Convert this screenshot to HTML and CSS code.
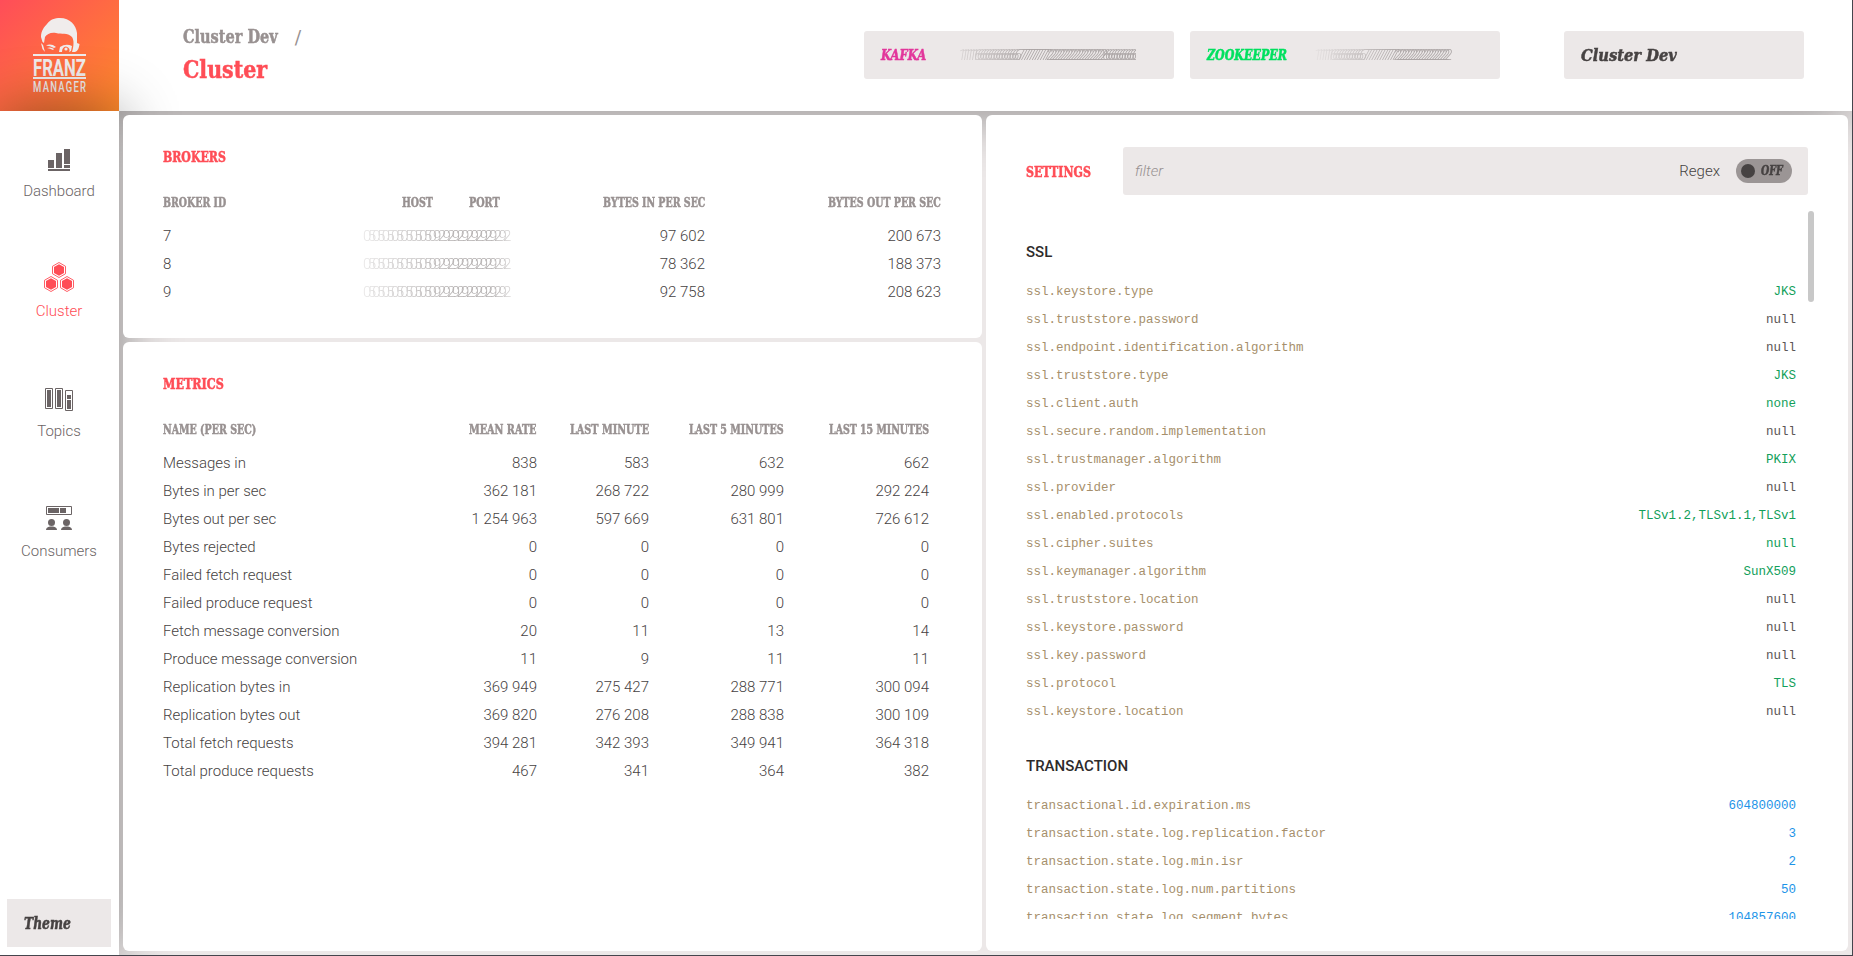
FILE: index.html
```html
<!DOCTYPE html>
<html lang="en">
<head>
<meta charset="utf-8">
<title>Franz Manager</title>
<link rel="stylesheet" href="styles.css">
</head>
<body>
<div class="app">
  <header class="header">
    <svg class="logo" viewBox="0 0 119 111">
      <defs><linearGradient id="lg" x1="0" y1="0" x2="1" y2="1"><stop offset="0" stop-color="#ff4d59"/><stop offset="1" stop-color="#ff8a2a"/></linearGradient></defs>
      <rect width="119" height="111" fill="url(#lg)"/>
      <g fill="#f0ecec">
        <path d="M42.500 42L41 37C41 31 44 27 47 24C50 19.500 55 18 60 18C70 18 76 25 77 33L77 43L79.500 44C79 48 78 51 75 52L72 52C74 45 74 40 72 37C67 32 62 35 56 33C51 32 47 34 45 37L44 43Z"/>
        <path d="M46 45.500Q51 43 56 47L54 48Q50 45.500 46 45.500ZM47 48Q51 46.500 54 49L53 50Q50 48.500 47 48ZM60 47Q66 43 72 46L71 51L69 52Q71 48 66 46.500Q62 47 62 52L59 52Z"/>
        <circle cx="66" cy="49" r="1.600"/>
        <path d="M41 43L43 45L45 52L42.500 49Z"/>
        <rect x="33" y="54" width="53" height="2"/>
        <rect x="33" y="77" width="53" height="2"/>
        <text class="logo-name" x="33" y="75.500" textLength="53" lengthAdjust="spacingAndGlyphs">FRANZ</text>
        <text class="logo-sub" transform="translate(33 91.500) scale(.68 1)" textLength="78" lengthAdjust="spacing">MANAGER</text>
      </g>
    </svg>
    <div class="crumbs">
      <div class="crumb-top"><span class="slab" data-w="95">Cluster Dev</span><span class="slash">/</span></div>
      <div class="crumb-page"><span class="slab" data-w="84">Cluster</span></div>
    </div>
    <div class="box endpoint"><span class="slab it kafka" data-w="45">KAFKA</span><span class="smear smear-k">111111666666666666666677777777777222222222222222222222666666666666</span></div>
    <div class="box endpoint"><span class="slab it zoo" data-w="80">ZOOKEEPER</span><span class="smear smear-z">11111166666666666677777777777722222222222222222222</span></div>
    <div class="box picker"><span class="slab it" data-w="96">Cluster Dev</span></div>
  </header>
  <div class="body">
    <aside class="sidebar">
      <nav>
        <a class="item"><svg width="40" height="40"><path d="M9 20h6v8H9zM17 13h6v15h-6zM25 9h6v15h-6zM25 25h6v3h-6zM9 29h22v2H9z"/></svg>Dashboard</a>
        <a class="item active"><svg width="40" height="40"><defs><g id="hex"><path d="M0-7.500L6.500-3.750V3.750L0 7.500L-6.500 3.750V-3.750Z" fill="none" stroke="#ff4d56" stroke-width=".9"/><path d="M0-5.800L5-2.900V2.900L0 5.800L-5 2.900V-2.900Z"/></g></defs><use href="#hex" x="20" y="10"/><use href="#hex" x="12" y="24"/><use href="#hex" x="28" y="24"/></svg>Cluster</a>
        <a class="item"><svg width="40" height="40"><path d="M6.500 8.500h7v20h-7zM16.500 8.500h7v20h-7zM26.500 10.500h7v20h-7z" fill="none" stroke="#6b6465"/><path d="M8 10h4v17H8zM18 10h4v17h-4zM28 15h4v4h-4zM28 20h4v9h-4z"/></svg>Topics</a>
        <a class="item"><svg width="40" height="40"><path d="M7.500 6.500h25v8h-25z" fill="none" stroke="#6b6465"/><path d="M9 8h11v5H9zM21 8h6v5h-6z"/><g id="usr"><circle cx="12.500" cy="22.500" r="3.500"/><path d="M7 30Q7 27 11 26.500H14Q18 27 18 30Z"/></g><use href="#usr" x="15"/></svg>Consumers</a>
      </nav>
      <div class="box theme"><span class="slab it" data-w="47">Theme</span></div>
    </aside>
    <main class="main">
      <div class="left">
        <section class="panel brokers">
          <h2><span class="slab" data-w="63">BROKERS</span></h2>
          <div class="row head"><span><b class="slab" data-w="63">BROKER ID</b></span><span><b class="slab" data-w="31">HOST</b></span><span><b class="slab" data-w="31">PORT</b></span><span><b class="slab" data-w="102">BYTES IN PER SEC</b></span><span><b class="slab" data-w="113">BYTES OUT PER SEC</b></span></div>
          <div class="row"><span>7</span><span class="smear smear-h">0505050505050509292929292929292</span><span>97 602</span><span>200 673</span></div>
          <div class="row"><span>8</span><span class="smear smear-h">0505050505050509292929292929292</span><span>78 362</span><span>188 373</span></div>
          <div class="row"><span>9</span><span class="smear smear-h">0505050505050509292929292929292</span><span>92 758</span><span>208 623</span></div>
        </section>
        <section class="panel metrics">
          <h2><span class="slab" data-w="61">METRICS</span></h2>
          <div class="row head"><span><b class="slab" data-w="93">NAME (PER SEC)</b></span><span><b class="slab" data-w="68">MEAN RATE</b></span><span><b class="slab" data-w="79">LAST MINUTE</b></span><span><b class="slab" data-w="95">LAST 5 MINUTES</b></span><span><b class="slab" data-w="100">LAST 15 MINUTES</b></span></div>
          <div class="row"><span>Messages in</span><span>838</span><span>583</span><span>632</span><span>662</span></div>
          <div class="row"><span>Bytes in per sec</span><span>362 181</span><span>268 722</span><span>280 999</span><span>292 224</span></div>
          <div class="row"><span>Bytes out per sec</span><span>1 254 963</span><span>597 669</span><span>631 801</span><span>726 612</span></div>
          <div class="row"><span>Bytes rejected</span><span>0</span><span>0</span><span>0</span><span>0</span></div>
          <div class="row"><span>Failed fetch request</span><span>0</span><span>0</span><span>0</span><span>0</span></div>
          <div class="row"><span>Failed produce request</span><span>0</span><span>0</span><span>0</span><span>0</span></div>
          <div class="row"><span>Fetch message conversion</span><span>20</span><span>11</span><span>13</span><span>14</span></div>
          <div class="row"><span>Produce message conversion</span><span>11</span><span>9</span><span>11</span><span>11</span></div>
          <div class="row"><span>Replication bytes in</span><span>369 949</span><span>275 427</span><span>288 771</span><span>300 094</span></div>
          <div class="row"><span>Replication bytes out</span><span>369 820</span><span>276 208</span><span>288 838</span><span>300 109</span></div>
          <div class="row"><span>Total fetch requests</span><span>394 281</span><span>342 393</span><span>349 941</span><span>364 318</span></div>
          <div class="row"><span>Total produce requests</span><span>467</span><span>341</span><span>364</span><span>382</span></div>
        </section>
      </div>
      <section class="panel settings">
        <div class="settings-bar">
          <h2><span class="slab" data-w="65">SETTINGS</span></h2>
          <div class="box filter"><span class="placeholder">filter</span><span>Regex</span><div class="toggle"><i class="knob"></i><span class="slab it" data-w="22">OFF</span></div></div>
        </div>
        <div class="scroll">
          <div class="list">
            <h3>SSL</h3>
            <div class="kv"><span>ssl.keystore.type</span><span class="str">JKS</span></div>
            <div class="kv"><span>ssl.truststore.password</span><span>null</span></div>
            <div class="kv"><span>ssl.endpoint.identification.algorithm</span><span>null</span></div>
            <div class="kv"><span>ssl.truststore.type</span><span class="str">JKS</span></div>
            <div class="kv"><span>ssl.client.auth</span><span class="str">none</span></div>
            <div class="kv"><span>ssl.secure.random.implementation</span><span>null</span></div>
            <div class="kv"><span>ssl.trustmanager.algorithm</span><span class="str">PKIX</span></div>
            <div class="kv"><span>ssl.provider</span><span>null</span></div>
            <div class="kv"><span>ssl.enabled.protocols</span><span class="str">TLSv1.2,TLSv1.1,TLSv1</span></div>
            <div class="kv"><span>ssl.cipher.suites</span><span class="str">null</span></div>
            <div class="kv"><span>ssl.keymanager.algorithm</span><span class="str">SunX509</span></div>
            <div class="kv"><span>ssl.truststore.location</span><span>null</span></div>
            <div class="kv"><span>ssl.keystore.password</span><span>null</span></div>
            <div class="kv"><span>ssl.key.password</span><span>null</span></div>
            <div class="kv"><span>ssl.protocol</span><span class="str">TLS</span></div>
            <div class="kv"><span>ssl.keystore.location</span><span>null</span></div>
            <h3>TRANSACTION</h3>
            <div class="kv"><span>transactional.id.expiration.ms</span><span class="num">604800000</span></div>
            <div class="kv"><span>transaction.state.log.replication.factor</span><span class="num">3</span></div>
            <div class="kv"><span>transaction.state.log.min.isr</span><span class="num">2</span></div>
            <div class="kv"><span>transaction.state.log.num.partitions</span><span class="num">50</span></div>
            <div class="kv"><span>transaction.state.log.segment.bytes</span><span class="num">104857600</span></div>
          </div>
          <div class="thumb"></div>
        </div>
      </section>
    </main>
  </div>
</div>
<script src="fit.js"></script>
</body>
</html>
```
FILE: styles.css
```css
* { box-sizing: border-box; }
body { margin: 0; background: #45454d; overflow: hidden; font: 300 15px Roboto, sans-serif; color: #464242; }
.app { width: 1852px; height: 955px; overflow: hidden; display: flex; flex-direction: column; background: #ece8e8; }
.header { position: relative; z-index: 1; height: 111px; flex: none; display: flex; align-items: flex-start; background: #fff; box-shadow: 0 0 60px rgba(0, 0, 0, .44); padding-right: 48px; }
.logo { width: 119px; height: 111px; flex: none; }
.logo-name { font: 700 24px Roboto, sans-serif; }
.logo-sub { font: 500 14px Roboto, sans-serif; }
.crumbs { margin: 22px auto 0 64px; }
.crumb-top { height: 30px; line-height: 30px; font-size: 18px; color: #989191; display: flex; }
.crumb-page { height: 34px; line-height: 35px; font-size: 25px; color: #ff4d56; }
.slash { font: 400 19px/30px "DejaVu Serif", serif; margin-left: 17px; }
.slab { display: inline-block; white-space: nowrap; font-family: "DejaVu Serif Condensed", "DejaVu Serif", serif; font-stretch: condensed; font-weight: 700; transform-origin: left center; -webkit-text-stroke: .5px currentColor; }
.it { font-style: italic; }
.box { height: 48px; background: #ece8e8; border-radius: 3px; display: flex; align-items: center; }
.header .box { margin-top: 31px; padding-left: 17px; flex: none; }
.endpoint { width: 310px; margin-right: 16px; font-size: 14px; }
.kafka { color: #e2379b; }
.zoo { color: #00e05f; }
.picker { width: 240px; margin-left: 48px; font-size: 17px; }
.smear { white-space: nowrap; }
.header .smear { font: italic 300 14px/16px Roboto, sans-serif; color: #aaa4a4; letter-spacing: -4.860px; }
.smear-k { width: 178px; margin-left: 32px; mask-image: linear-gradient(90deg, rgba(0,0,0,.3), #000 40%); }
.smear-z { width: 146px; margin-left: 27px; mask-image: linear-gradient(90deg, rgba(0,0,0,.1), #000 60%); }
.body { flex: 1; display: flex; min-height: 0; }
.sidebar { position: relative; z-index: 2; width: 119px; flex: none; background: #fff; box-shadow: 0 0 60px rgba(0, 0, 0, .44); padding: 29px 8px 8px 7px; display: flex; flex-direction: column; justify-content: space-between; }
.item { display: flex; flex-direction: column; align-items: center; height: 120px; line-height: 23px; color: #6b6465; fill: #6b6465; }
.item.active { color: #ff4d56; fill: #ff4d56; }
.item svg { flex: none; overflow: visible; }
.theme { font-size: 16px; padding-left: 17px; border-radius: 0; }
.main { flex: 1; display: flex; gap: 4px; padding: 4px; }
.left { display: flex; flex-direction: column; gap: 4px; width: 859px; }
.panel { position: relative; z-index: 3; background: #fff; border-radius: 6px; padding: 30px 0 0 40px; }
.brokers { height: 223px; }
.metrics { flex: 1; }
.settings { flex: 1; padding-top: 32px; }
h2 { margin: 0; height: 24px; line-height: 24px; font-size: 14.500px; color: #ff4d56; }
.row { display: grid; line-height: 28px; height: 28px; }
.row > span { text-align: right; }
.row > span:first-child { text-align: left; }
.row > span:not(:first-child) .slab { transform-origin: right center; float: right; }
.head { margin: 19px 0 6px; font-size: 13.500px; color: #989191; }
.brokers .row { grid-template-columns: 200px 70px 67px 205px 236px; }
.metrics .row { grid-template-columns: 250px 124px 112px 135px 145px; }
.row .smear-h { grid-column: 2 / 4; width: 151px; justify-self: start; text-align: left; color: #b4b0b0; letter-spacing: -3.650px; mask-image: linear-gradient(90deg, rgba(0,0,0,.3), #000 60%, #000 85%, rgba(0,0,0,.4)); }
.settings-bar { display: flex; align-items: center; }
.settings-bar h2 { width: 97px; line-height: 25px; }
.filter { width: 685px; padding: 0 16px 0 12px; }
.placeholder { font-style: italic; color: #989191; margin-right: auto; }
.toggle { width: 56px; height: 24px; margin-left: 16px; border-radius: 12px; background: #9b9595; display: flex; align-items: center; gap: 6px; padding-left: 5px; font-size: 12px; }
.knob { width: 14px; height: 14px; border-radius: 50%; background: #464242; flex: none; }
.scroll { display: flex; height: 708px; margin-top: 16px; overflow: hidden; }
.list { width: 770px; margin-right: 12px; }
h3 { margin: 0; font: 500 15px/24px Roboto, sans-serif; color: #2e2b2b; padding: 29px 0 14px; }
.kv + h3 { padding: 28px 0 14px; }
.kv { display: flex; justify-content: space-between; font: 400 12.500px/28px "Liberation Mono", monospace; color: #5b5656; }
.kv span:first-child { color: #a68f6c; }
.kv .str { color: #12a05a; }
.kv .num { color: #1d94e8; }
.thumb { width: 6px; height: 91px; border-radius: 3px; background: #c8c8c8; }
```
FILE: fit.js
```js
// Condense the slab headings to their design widths.
document.querySelectorAll('[data-w]').forEach(function (el) {
  var w = +el.dataset.w, full = el.offsetWidth;
  el.style.transform = 'scaleX(' + w / full + ')';
  if (!el.closest('.row')) el.style.marginRight = (w - full) + 'px';
});
```
